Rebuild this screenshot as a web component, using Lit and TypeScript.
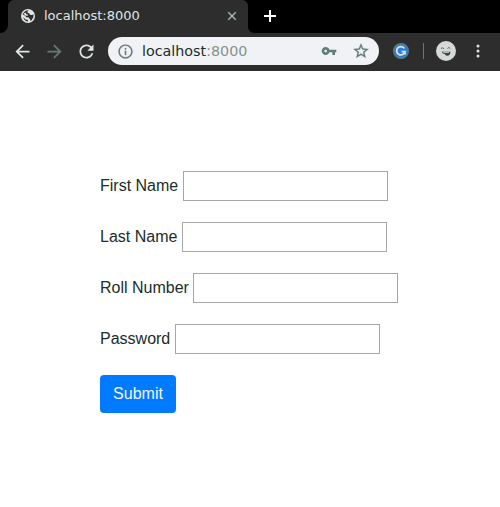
import { LitElement, html, css, svg } from "lit";
import { customElement } from "lit/decorators.js";

const icon = (cls: string, path: string) => html`
  <svg class=${cls} viewBox="0 0 24 24" aria-hidden="true">${svg`<path d=${path} />`}</svg>
`;

const BACK = "M20 11H7.83l5.59-5.59L12 4l-8 8 8 8 1.41-1.41L7.83 13H20v-2z";
const FORWARD = "M12 4l-1.41 1.41L16.17 11H4v2h12.17l-5.58 5.59L12 20l8-8z";
const RELOAD =
  "M17.65 6.35C16.2 4.9 14.21 4 12 4c-4.42 0-7.99 3.58-7.99 8s3.57 8 7.99 8c3.73 0 6.84-2.55 7.73-6h-2.08c-.82 2.33-3.04 4-5.65 4-3.31 0-6-2.69-6-6s2.69-6 6-6c1.66 0 3.14.69 4.22 1.78L13 11h7V4l-2.35 2.35z";
const INFO =
  "M11 17h2v-6h-2v6zm1-15C6.48 2 2 6.48 2 12s4.48 10 10 10 10-4.48 10-10S17.52 2 12 2zm0 18c-4.41 0-8-3.59-8-8s3.59-8 8-8 8 3.59 8 8-3.59 8-8 8zM11 9h2V7h-2v2z";
const KEY =
  "M12.65 10C11.83 7.67 9.61 6 7 6c-3.31 0-6 2.69-6 6s2.69 6 6 6c2.61 0 4.83-1.67 5.65-4H17v4h4v-4h2v-4H12.65zM7 14c-1.1 0-2-.9-2-2s.9-2 2-2 2 .9 2 2-.9 2-2 2z";
const STAR =
  "M22 9.24l-7.19-.62L12 2 9.19 8.63 2 9.24l5.46 4.73L5.82 21 12 17.27 18.18 21l-1.63-7.03L22 9.24zM12 15.4l-3.76 2.27 1-4.28-3.32-2.88 4.38-.38L12 6.1l1.71 4.04 4.38.38-3.32 2.88 1 4.28L12 15.4z";
const CLOSE =
  "M19 6.41L17.59 5 12 10.59 6.41 5 5 6.41 10.59 12 5 17.59 6.41 19 12 13.41 17.59 19 19 17.59 13.41 12z";

@customElement("browser-bar")
class BrowserBar extends LitElement {
  static styles = css`
    :host {
      display: block;
      font-family: "DejaVu Sans", sans-serif;
    }
    svg {
      display: block;
      flex: none;
      fill: currentColor;
    }
    .strip {
      display: flex;
      height: 33px;
      background: #000;
    }
    .flare {
      width: 8px;
      height: 33px;
      color: #2d2d2d;
    }
    .tab {
      box-sizing: border-box;
      width: 240px;
      display: flex;
      align-items: center;
      padding: 0 9px 1px 13px;
      border-radius: 6px 6px 0 0;
      background: #2d2d2d;
      color: #dfe5e3;
      font-size: 13px;
      line-height: 15px;
    }
    .globe {
      width: 14px;
      height: 14px;
      color: #e0e6e5;
    }
    .title {
      flex: 1;
      margin: 0 0 1px 9px;
    }
    .close {
      width: 14px;
      height: 14px;
      color: #a3b5b0;
      stroke: currentColor;
      stroke-width: 0.8;
    }
    .plus {
      width: 14px;
      height: 14px;
      margin: 9px 0 0 7px;
      color: #fff;
    }
    .toolbar {
      display: flex;
      align-items: center;
      height: 38px;
      box-sizing: border-box;
      padding: 0 0 2px 11.5px;
      background: #2d2d2d;
      color: #e0e6e5;
    }
    .nav {
      width: 21px;
      height: 21px;
      margin-right: 11px;
    }
    .forward {
      color: #637c75;
    }
    .reload {
      margin-right: 11.5px;
    }
    .address {
      box-sizing: border-box;
      width: 271px;
      height: 28px;
      display: flex;
      align-items: center;
      padding: 0 9px;
      border-radius: 14px;
      background: #f0f2f5;
      color: #637c75;
    }
    .info {
      width: 17px;
      height: 17px;
      stroke: currentColor;
      stroke-width: 0.2;
    }
    .url {
      flex: 1;
      margin-left: 8px;
      font-size: 14.3px;
      line-height: 16px;
      color: #222c29;
    }
    .port {
      color: #84928e;
    }
    .key {
      width: 16px;
      height: 16px;
      margin-right: 15px;
    }
    .star {
      width: 18px;
      height: 18px;
      stroke: currentColor;
      stroke-width: 0.4;
    }
    .badge {
      width: 16px;
      height: 16px;
      margin-left: 14px;
    }
    .divider {
      width: 1px;
      height: 16px;
      margin: 0 12px 0 14px;
      background: #637c75;
    }
    .avatar {
      width: 20px;
      height: 20px;
    }
    .more {
      width: 4px;
      height: 14px;
      margin-left: 20px;
    }
  `;

  render() {
    return html`
      <div class="strip">
        <svg class="flare" viewBox="0 0 8 33"><path d="M8 25a8 8 0 0 1-8 8h8z" /></svg>
        <div class="tab">
          <svg class="globe" viewBox="0 0 14 14">
            <circle cx="7" cy="7" r="7" />
            <path
              d="M7.6 1.3Q5.8 2.4 6.6 3.8 8.6 4 8.8 5.4 10.6 6.4 12.6 5.6 13 8.8 10.8 11 9.8 11.8 9.2 11.6 9.6 9.6 8 9.2L7.4 8.2H4.8L4.6 6.8 1.6 5.4Q2.6 2.8 4.8 1.8z"
              fill="#2d2d2d"
            />
            <path d="M2.6 4.6L4.6 3.4 5.4 5.2 7.2 5.6 7 6.6 4.6 6.8z" />
            <path d="M2.2 8.6Q3.6 9 4.4 10.4L6.6 10.8 7.2 12.6Q3.6 12.4 2.2 8.6z" fill="#2d2d2d" />
          </svg>
          <span class="title">localhost:8000</span>
          ${icon("close", CLOSE)}
        </div>
        <svg class="flare" viewBox="0 0 8 33"><path d="M0 27a6 6 0 0 0 6 6H0z" /></svg>
        <svg class="plus" viewBox="0 0 14 14"><path d="M6 1h2v5h5v2H8v5H6V8H1V6h5z" /></svg>
      </div>
      <div class="toolbar">
        ${icon("nav", BACK)} ${icon("nav forward", FORWARD)} ${icon("nav reload", RELOAD)}
        <div class="address">
          ${icon("info", INFO)}
          <span class="url">localhost<span class="port">:8000</span></span>
          ${icon("key", KEY)} ${icon("star", STAR)}
        </div>
        <svg class="badge" viewBox="0 0 16 16">
          <circle cx="8" cy="8" r="7.4" fill="#2580dc" stroke="#637c75" stroke-width="1.2" />
          <path
            d="M11.4 5.4A4.2 4.2 0 1 0 12 8.7H8.6M12 8.2v3.4"
            fill="none" stroke="#dfe5e3" stroke-width="1.7"
          />
        </svg>
        <div class="divider"></div>
        <svg class="avatar" viewBox="0 0 20 20">
          <circle cx="10" cy="10" r="10" fill="#d4d8d6" />
          <path d="M5 7.6l1.5-.9L8 7.8M11.5 7.5l1.3-1 1.5 1" fill="none" stroke="#59645f" />
          <path d="M5.8 10.7h8.6q0 4-3.4 4-1.6 0-2-1.6-2.6-.2-3.2-2.4z" fill="#39423f" />
          <path d="M7 11h6v1H7.8z" fill="#b9bfbc" />
        </svg>
        <svg class="more" viewBox="0 0 4 14">
          <circle cx="2" cy="2" r="1.5" /><circle cx="2" cy="7" r="1.5" />
          <circle cx="2" cy="12" r="1.5" />
        </svg>
      </div>
    `;
  }
}

@customElement("student-form")
class StudentForm extends LitElement {
  static styles = css`
    :host {
      display: block;
      padding: 100px 0 0 100px;
      font: 16px/24px "Liberation Sans", Arial, sans-serif;
      color: #212c29;
    }
    form {
      display: flex;
      flex-direction: column;
      align-items: flex-start;
      gap: 21px;
    }
    .row {
      display: flex;
      align-items: center;
      gap: 4.45px;
    }
    .field {
      box-sizing: border-box;
      width: 205px;
      height: 30px;
      margin: 0;
      padding: 1px 4px;
      border: 1px solid #a6a6a6;
      border-radius: 0;
      background: #fff;
      font: inherit;
      outline: none;
    }
    .submit {
      box-sizing: border-box;
      width: 76px;
      height: 38px;
      padding: 0;
      border: 0;
      border-radius: 4px;
      background: #007bff;
      color: #f4f4f4;
      font: inherit;
    }
  `;

  private fields = [
    { label: "First Name", type: "text" },
    { label: "Last Name", type: "text" },
    { label: "Roll Number", type: "text" },
    { label: "Password", type: "password" },
  ];

  render() {
    return html`
      <form>
        ${this.fields.map(
          (f) => html`<label class="row"><span>${f.label}</span><input class="field" type=${f.type} /></label>`
        )}
        <button class="submit" type="button">Submit</button>
      </form>
    `;
  }
}

@customElement("app-root")
class AppRoot extends LitElement {
  static styles = css`
    :host {
      display: block;
      height: 507px;
      overflow: hidden;
      background: #fff;
    }
  `;

  render() {
    return html`<browser-bar></browser-bar><student-form></student-form>`;
  }
}
